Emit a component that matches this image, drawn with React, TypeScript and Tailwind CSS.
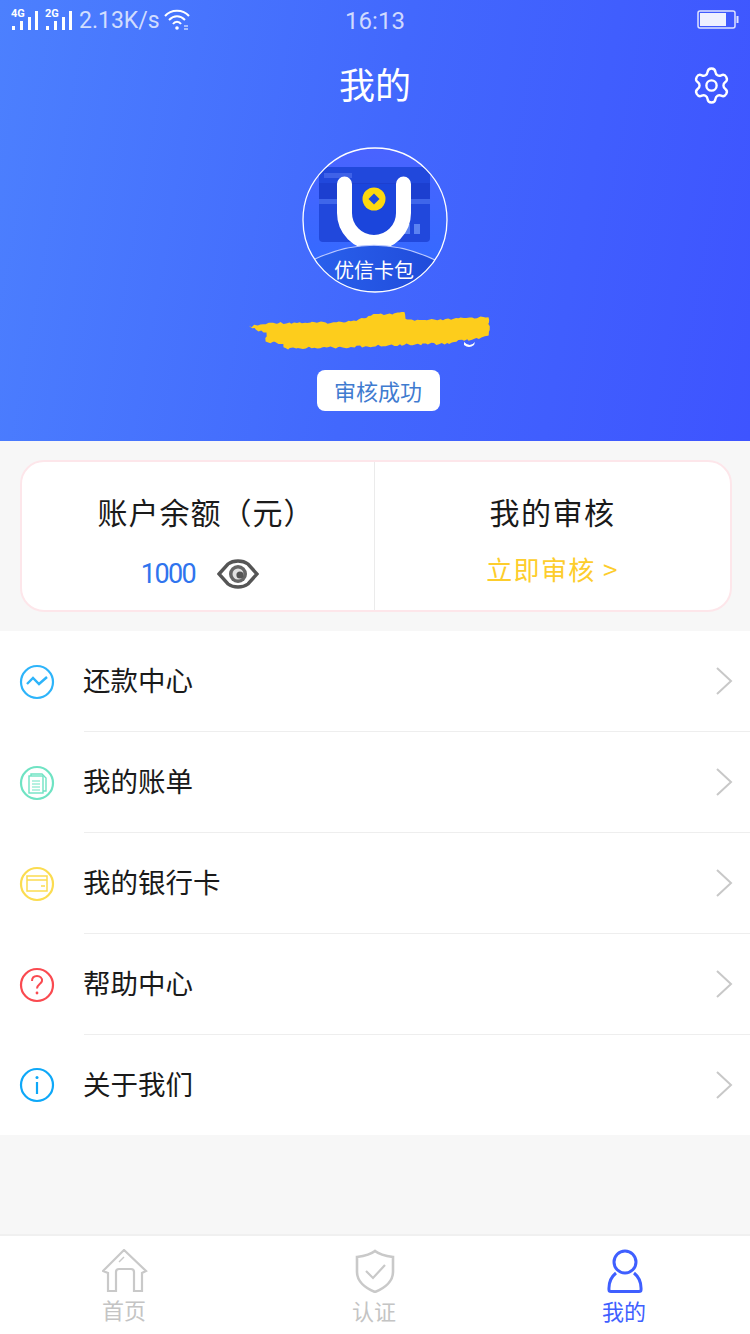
import { Settings } from "lucide-react";
import type { ReactNode } from "react";

const cjk = "font-['Noto_Sans_CJK_SC','Noto_Sans',sans-serif]";

function Signal({ label }: { label: string }) {
  return (
    <svg width="30" height="24" viewBox="0 0 30 24" fill="white">
      <text x="0" y="9" fontSize="11" fontWeight="700" fontFamily="Roboto, sans-serif">{label}</text>
      <rect x="1" y="18" width="3" height="4" />
      <rect x="9" y="13" width="3" height="9" />
      <rect x="17" y="9" width="3" height="13" />
      <rect x="24" y="3" width="3" height="19" />
    </svg>
  );
}

function Wifi() {
  return (
    <svg width="28" height="24" viewBox="0 0 28 24" fill="none" stroke="white" strokeWidth="2">
      <path d="M1 8 C7 1 19 1 25 8" />
      <path d="M5 12 C10 7 16 7 21 12" />
      <path d="M9 16 C11 13 15 13 17 16" />
      <circle cx="13" cy="20" r="1.8" fill="white" stroke="none" />
      <path d="M20 18h4M20 21h4" strokeWidth="1.5" opacity=".7" />
    </svg>
  );
}

function Battery() {
  return (
    <svg width="42" height="20" viewBox="0 0 42 20">
      <rect x="1" y="1" width="37" height="17" rx="2" fill="none" stroke="#dfe3ff" strokeWidth="1.5" />
      <rect x="3" y="3" width="26" height="13" fill="#eef0ff" />
      <rect x="39.5" y="6" width="2" height="7" fill="#dfe3ff" />
    </svg>
  );
}

function Logo() {
  return (
    <svg width="146" height="146" viewBox="0 0 146 146">
      <defs>
        <clipPath id="round"><circle cx="73" cy="73" r="72" /></clipPath>
        <linearGradient id="face" x1="0" y1="0" x2="0" y2="1">
          <stop offset="0" stopColor="#4a63ff" />
          <stop offset="1" stopColor="#2f6bff" />
        </linearGradient>
        <linearGradient id="band" x1="0" y1="0" x2="1" y2="0">
          <stop offset="0" stopColor="#2a62ee" />
          <stop offset="1" stopColor="#1f49d8" />
        </linearGradient>
      </defs>
      <g clipPath="url(#round)">
        <rect width="146" height="146" fill="url(#face)" />
        <rect x="17" y="20" width="111" height="75" rx="4" fill="#2148dc" />
        <rect x="17" y="36" width="111" height="16" fill="#1c3fd0" />
        <rect x="17" y="52" width="111" height="5" fill="#3f66ea" />
        <rect x="22" y="26" width="28" height="5" fill="#3f62e8" />
        <rect x="92" y="77" width="6" height="10" fill="#5b82f2" />
        <rect x="102" y="77" width="6" height="10" fill="#5b82f2" />
        <rect x="112" y="77" width="6" height="10" fill="#5b82f2" />
        <path d="M42.5 37 V66 A29.5 29.5 0 0 0 101.5 66 V37 Z" fill="#1b45dc" />
        <path d="M42.5 37 V66 A29.5 29.5 0 0 0 101.5 66 V37" fill="none" stroke="white" strokeWidth="15" strokeLinecap="round" />
        <circle cx="72" cy="52" r="11.5" fill="#fdd80f" />
        <path d="M72 46.5 L77.5 52 L72 57.5 L66.5 52 Z" fill="#2148dc" />
        <path d="M13 112 Q73 84 133 113 L146 146 H0 Z" fill="url(#band)" />
        <path d="M13 112 Q73 84 133 113" fill="none" stroke="#b9c8ff" strokeWidth="1.2" />
        <text x="72" y="131" textAnchor="middle" fontSize="20" fill="white" fontFamily="'Noto Sans CJK SC', sans-serif">优信卡包</text>
      </g>
      <circle cx="73" cy="73" r="72" fill="none" stroke="white" strokeWidth="1.3" />
    </svg>
  );
}

const scribblePts: [number, number][] = [
  [28, 560], [100, 548], [280, 548], [350, 540], [400, 525], [495, 518], [500, 542], [600, 540],
  [745, 530], [748, 570], [742, 590], [680, 600], [620, 610], [400, 618], [310, 622], [135, 625],
  [130, 612], [75, 605], [80, 580],
];

function scribblePath() {
  const out: string[] = [];
  let n = 0;
  scribblePts.forEach((p, i) => {
    const q = scribblePts[(i + 1) % scribblePts.length];
    const len = Math.hypot(q[0] - p[0], q[1] - p[1]);
    const steps = Math.max(1, Math.round(len / 8));
    for (let s = 0; s < steps; s++) {
      const t = s / steps;
      const wob = Math.sin(n * 12.9898) * 43758.5453;
      const j = (wob - Math.floor(wob) - 0.5) * 2.4;
      const wob2 = Math.sin(n * 78.233) * 12543.123;
      const k = (wob2 - Math.floor(wob2) - 0.5) * 1.6;
      const x = (p[0] + (q[0] - p[0]) * t) / 3 - 10 + k;
      const y = (p[1] + (q[1] - p[1]) * t) / 3 - 173 + j;
      out.push(`${x.toFixed(1)} ${y.toFixed(1)}`);
      n++;
    }
  });
  return `M${out.join(" L")} Z`;
}

function Scribble() {
  return (
    <svg width="242" height="38" viewBox="0 0 242 38" className="overflow-visible">
      <path fill="#fff" d="M214 29 q6 6 11 0 l-1 3 q-5 4 -10 0 Z" />
      <path fill="#fdcd1c" d={scribblePath()} />
    </svg>
  );
}

function Eye() {
  return (
    <svg width="42" height="30" viewBox="0 0 42 30" fill="none">
      <path d="M2 15 L11 5 Q15 2 21 2 Q27 2 31 5 L40 15 L31 25 Q27 28 21 28 Q15 28 11 25 Z" stroke="#555" strokeWidth="3.4" />
      <circle cx="21" cy="15" r="9" fill="#666" />
      <circle cx="21" cy="15" r="5.5" fill="#e2e2e2" />
      <circle cx="23" cy="16" r="3.6" fill="#555" />
    </svg>
  );
}

function Chevron() {
  return (
    <svg width="18" height="30" viewBox="0 0 18 30" fill="none" stroke="#c8c8c8" strokeWidth="2">
      <path d="M2 2 L16 15 L2 28" />
    </svg>
  );
}

function RoundIcon({ color, children }: { color: string; children: ReactNode }) {
  return (
    <svg width="36" height="36" viewBox="0 0 36 36" fill="none" stroke={color} strokeWidth="2.2">
      <circle cx="18" cy="18" r="16" />
      {children}
    </svg>
  );
}

const rows: { label: string; icon: ReactNode }[] = [
  {
    label: "还款中心",
    icon: (
      <RoundIcon color="#2db4fa">
        <path d="M8 20 L14 14 L20 20 L28 13" strokeWidth="2.4" />
      </RoundIcon>
    ),
  },
  {
    label: "我的账单",
    icon: (
      <RoundIcon color="#6fe3c3">
        <path d="M12 11 V9 H23 L27 13 V26 H24" strokeWidth="1.4" />
        <rect x="10" y="11" width="14" height="17" strokeWidth="1.4" />
        <path d="M13 16 H21 M13 19 H21 M13 22 H21 M13 25 H21" strokeWidth="1.2" />
      </RoundIcon>
    ),
  },
  {
    label: "我的银行卡",
    icon: (
      <RoundIcon color="#fbdc50">
        <rect x="8" y="10" width="20" height="15" strokeWidth="1.5" />
        <path d="M8 14 H28 M22 20 H26" strokeWidth="1.5" />
      </RoundIcon>
    ),
  },
  {
    label: "帮助中心",
    icon: (
      <RoundIcon color="#fa4a50">
        <path d="M13 14 C13 10.5 15.5 9 18 9 C21 9 23.5 11 23 14 C22.5 17 18 17.5 18 21.5" strokeWidth="2" />
        <circle cx="18" cy="26" r="1.4" fill="#fa4a50" stroke="none" />
      </RoundIcon>
    ),
  },
  {
    label: "关于我们",
    icon: (
      <RoundIcon color="#0ea8f8">
        <circle cx="18" cy="10.5" r="1.5" fill="#0ea8f8" stroke="none" />
        <path d="M18 15 V27" strokeWidth="2.2" />
      </RoundIcon>
    ),
  },
];

function Row({ label, icon, last }: { label: string; icon: ReactNode; last: boolean }) {
  return (
    <div className={`flex items-stretch ${last ? "h-[100px]" : "h-[101px]"}`}>
      <div className="flex w-[84px] shrink-0 items-center pl-[19px]">{icon}</div>
      <div className={`flex flex-1 items-center justify-between pr-[17px] ${last ? "" : "border-b border-[#eeeeee]"}`}>
        <span className="mb-[3px] ml-[-1px] text-[27.5px] text-[#1a1a1a]">{label}</span>
        <Chevron />
      </div>
    </div>
  );
}

function NavItem({ label, color, icon, gap }: { label: string; color: string; icon: ReactNode; gap: string }) {
  return (
    <div className={`flex flex-1 flex-col items-center ${gap}`}>
      {icon}
      <span className="ml-[-2px] text-[22px] leading-[24px]" style={{ color }}>{label}</span>
    </div>
  );
}

export default function App() {
  return (
    <div className={`flex h-[1334px] w-[750px] flex-col overflow-hidden bg-[#f7f7f7] ${cjk}`}>
      <header className="flex h-[441px] flex-col items-center bg-[linear-gradient(100deg,#4c80fe_0%,#4268fd_50%,#3e54ff_100%)]">
        <div className="grid h-[40px] w-full grid-cols-3 items-center pl-[11px] pr-[11px] text-white/75">
          <div className="flex items-center gap-[4px] font-['Roboto',sans-serif] text-[23px]">
            <Signal label="4G" />
            <Signal label="2G" />
            <span className="pt-[3px] whitespace-nowrap">2.13K/s</span>
            <Wifi />
          </div>
          <div className="pt-[2px] text-center font-['Roboto',sans-serif] text-[24px]">16:13</div>
          <div className="flex justify-end"><Battery /></div>
        </div>
        <div className="grid h-[90px] w-full grid-cols-3 items-center px-[18px]">
          <div />
          <h1 className="mb-[4px] text-center text-[36px] text-white">我的</h1>
          <div className="flex justify-end"><Settings size={41} strokeWidth={1.4} color="white" /></div>
        </div>
        <div className="mt-[17px]"><Logo /></div>
        <div className="mt-[20px] h-[38px] mr-[8px]"><Scribble /></div>
        <div className="mt-[19px] ml-[6px] flex h-[41px] w-[123px] items-center justify-center rounded-[8px] bg-white text-[22px] text-[#3f7bd0]">
          审核成功
        </div>
      </header>

      <section className="flex h-[190px] shrink-0 pl-[20px] pt-[19px] pb-[19px]">
        <div className="flex h-[152px] w-[712px] rounded-[24px] border-2 border-[#fde6ea] bg-white">
          <div className="flex w-[353px] flex-col items-center border-r border-[#ebebeb]">
            <div className="mt-[27px] pl-[16px] text-[30px] leading-[44px] tracking-[1px] text-[#1a1a1a]">账户余额（元）</div>
            <div className="mt-[21px] flex items-center gap-[22px] pl-[4px]">
              <span className="font-['Roboto',sans-serif] text-[27px] tracking-[-1.6px] text-[#2f74ee]">1000</span>
              <Eye />
            </div>
          </div>
          <div className="flex flex-1 flex-col items-center">
            <div className="mt-[27px] text-[30px] leading-[44px] tracking-[1.5px] text-[#1a1a1a]">我的审核</div>
            <div className="mt-[16px] text-[26px] tracking-[1.4px] text-[#fdcd2c]">立即审核 &gt;</div>
          </div>
        </div>
      </section>

      <section className="bg-white">
        {rows.map((r, i) => (
          <Row key={r.label} label={r.label} icon={r.icon} last={i === rows.length - 1} />
        ))}
      </section>

      <div className="flex-1" />

      <nav className="flex h-[100px] border-t-2 border-[#f0f0f0] bg-white pt-[13px]">
        <NavItem
          label="首页"
          color="#c4c4c4"
          gap="gap-[4px]"
          icon={
            <svg width="46" height="44" viewBox="0 0 46 44" fill="none" stroke="#c9c9c9" strokeWidth="2.2">
              <path d="M1 22 L22 1 L44 22 L40 24 V42 H32 V23 Q32 20 29 20 H17 Q14 20 14 23 V42 H6 V24 Z" />
              <path d="M22 8 L17 13" strokeWidth="1.4" />
            </svg>
          }
        />
        <NavItem
          label="认证"
          color="#c4c4c4"
          gap="gap-[5px]"
          icon={
            <svg width="40" height="44" viewBox="0 0 40 44" fill="none" stroke="#c9c9c9" strokeWidth="2.6">
              <path d="M20 2 C25 6 31 7 38 8 V23 C38 32 30 39 20 43 C10 39 2 32 2 23 V8 C9 7 15 6 20 2 Z" />
              <path d="M11 22 L18 29 L30 16" strokeWidth="2.2" />
            </svg>
          }
        />
        <NavItem
          label="我的"
          color="#3f5fff"
          gap="gap-[5px]"
          icon={
            <svg width="36" height="44" viewBox="0 0 36 44" fill="none" stroke="#3f5fff" strokeWidth="3">
              <circle cx="18" cy="13" r="11" />
              <path d="M9 24 C4 28 1.5 33 2 41 C2 42 3 42.5 4 42.5 H32 C33 42.5 34 42 34 41 C34.5 33 32 28 27 24" />
            </svg>
          }
        />
      </nav>
    </div>
  );
}
